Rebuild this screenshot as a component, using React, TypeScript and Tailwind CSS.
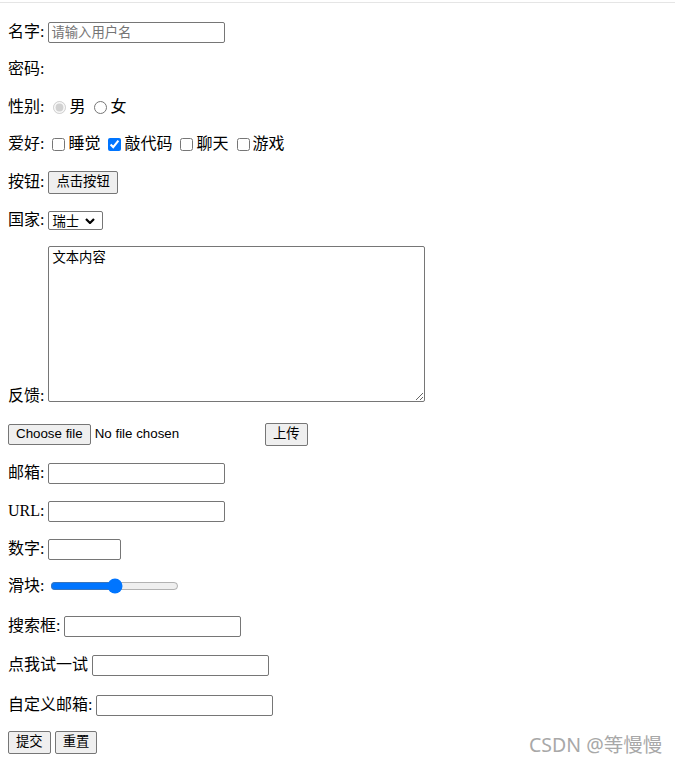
import React from 'react'

const ctl = "font-['Liberation_Sans','Noto_Sans_CJK_SC',sans-serif] text-[13.33px] text-black"
const field = `${ctl} h-[21px] w-[177px] border border-[#767676] rounded-[2px] px-[2px] bg-white outline-none placeholder:text-[#757575]`
const btn = `${ctl} h-[23px] px-[7px] border border-[#767676] rounded-[2px] bg-[#efefef]`
const row = 'flex items-center h-[22px] whitespace-nowrap'

export default function App() {
    return (
        <div className="relative h-[764px] w-full bg-white text-[16px] text-black font-['Liberation_Serif','Noto_Sans_CJK_SC',serif]">
            <div className="h-[2px]" />
            <div className="h-px bg-[#e5e5e5]" />

            <form className="flex flex-col px-2 pt-[18px]">
                <div className={row}>
                    <span>名字:</span>
                    <input type="text" placeholder="请输入用户名" className={`${field} ml-1`} />
                </div>

                <div className={`${row} mt-[15px]`}>
                    <span>密码:</span>
                </div>

                <div className={`${row} mt-4`}>
                    <span>性别:</span>
                    <input type="radio" name="sex" defaultChecked disabled className="ml-[9px] mr-[3px] h-[13px] w-[13px]" />
                    <span>男</span>
                    <input type="radio" name="sex" className="ml-[9px] mr-[3px] h-[13px] w-[13px]" />
                    <span>女</span>
                </div>

                <div className={`${row} mt-[15px]`}>
                    <span>爱好:</span>
                    <input type="checkbox" className="ml-[8px] mr-[3px] h-[13px] w-[13px]" />
                    <span>睡觉</span>
                    <input type="checkbox" defaultChecked className="ml-[8px] mr-[3px] h-[13px] w-[13px] accent-[#0075ff]" />
                    <span>敲代码</span>
                    <input type="checkbox" className="ml-[8px] mr-[3px] h-[13px] w-[13px]" />
                    <span>聊天</span>
                    <input type="checkbox" className="ml-[8px] mr-[3px] h-[13px] w-[13px]" />
                    <span>游戏</span>
                </div>

                <div className={`${row} mt-4`}>
                    <span>按钮:</span>
                    <button type="button" className={`${btn} ml-1`}>点击按钮</button>
                </div>

                <div className={`${row} mt-4`}>
                    <span>国家:</span>
                    <div className="relative ml-1 flex">
                        <select
                            defaultValue="ch"
                            className={`${ctl} h-[19px] w-[55px] appearance-none border border-[#767676] rounded-[2px] bg-white pl-[3px]`}
                        >
                            <option value="cn">中国</option>
                            <option value="ch">瑞士</option>
                            <option value="us">美国</option>
                        </select>
                        <svg
                            viewBox="0 0 10 6"
                            className="pointer-events-none absolute right-[8px] top-[7px] h-[6px] w-[10px]"
                            fill="none"
                            stroke="#000"
                            strokeWidth="2.2"
                        >
                            <path d="M1 1l4 4 4-4" />
                        </svg>
                    </div>
                </div>

                <div className="mt-[14px] flex h-[162px] items-end whitespace-nowrap">
                    <span className="mb-[1px] leading-[21.5px]">反馈:</span>
                    <textarea
                        defaultValue="文本内容"
                        className="ml-1 mb-[5px] h-[156px] w-[377px] resize border border-[#767676] rounded-[2px] bg-white px-[3px] py-[2px] font-['Liberation_Mono','Noto_Sans_CJK_SC',monospace] text-[13.33px] outline-none"
                    />
                </div>

                <div className={`${row} mt-4`}>
                    <label className={`${ctl} flex w-[253px] items-center`}>
                        <input type="file" className="hidden" />
                        <span className="flex h-[21px] items-center border border-[#767676] rounded-[2px] bg-[#efefef] px-[7px]">
                            Choose file
                        </span>
                        <span className="ml-[4px]">No file chosen</span>
                    </label>
                    <button type="button" className={`${btn} ml-1`}>上传</button>
                </div>

                <div className={`${row} mt-[17px]`}>
                    <span>邮箱:</span>
                    <input type="email" className={`${field} ml-1`} />
                </div>

                <div className={`${row} mt-4`}>
                    <span>URL:</span>
                    <input type="url" className={`${field} ml-1`} />
                </div>

                <div className={`${row} mt-4`}>
                    <span>数字:</span>
                    <input type="number" className={`${field} ml-1 !w-[73px]`} />
                </div>

                <div className={`${row} mt-[15px]`}>
                    <span>滑块:</span>
                    <input type="range" className="ml-[6px] w-[129px] accent-[#0075ff]" />
                </div>

                <div className={`${row} mt-[18px]`}>
                    <span>搜索框:</span>
                    <input type="search" className={`${field} ml-1`} />
                </div>

                <div className={`${row} mt-[17px]`}>
                    <span>点我试一试</span>
                    <input type="text" className={`${field} ml-1`} />
                </div>

                <div className={`${row} mt-[18px]`}>
                    <span>自定义邮箱:</span>
                    <input type="text" className={`${field} ml-1`} />
                </div>

                <div className={`${row} mt-[15px]`}>
                    <button type="submit" className={btn}>提交</button>
                    <button type="reset" className={`${btn} ml-1`}>重置</button>
                </div>
            </form>

            {/* watermark */}
            <div className="absolute left-[529px] top-[733px] font-['Noto_Sans','Noto_Sans_CJK_SC',sans-serif] text-[19.5px] leading-6 text-[#a8a8a8]">
                CSDN @等慢慢
            </div>
        </div>
    )
}
